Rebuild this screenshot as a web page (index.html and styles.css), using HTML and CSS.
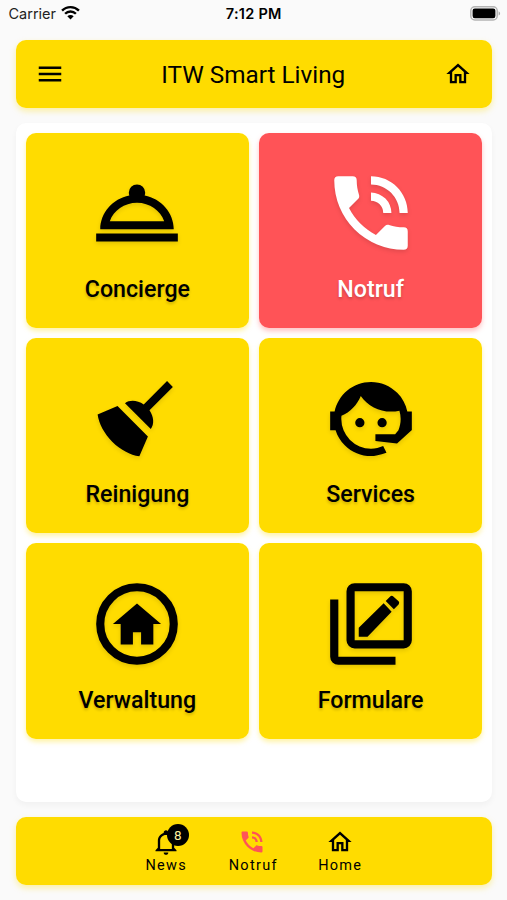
FILE: index.html
```html
<!DOCTYPE html>
<html lang="de">
<head>
    <meta charset="UTF-8">
    <meta name="viewport" content="width=device-width, initial-scale=1">
    <title>ITW Smart Living</title>
    <link rel="stylesheet" href="styles.css">
</head>

<body>

<div class="status">
  <div class="carrier">
    Carrier
    <svg class="wifi" viewBox="0 0 18 14">
      <path d="M1 5.2a11.4 11.4 0 0 1 16 0" />
      <path d="M3.9 8.2a7.2 7.2 0 0 1 10.2 0" />
      <path class="dot" d="M9 13.6l-3-3.1a4.3 4.3 0 0 1 6 0z" />
    </svg>
  </div>
  <div class="time">7:12 PM</div>
  <div class="battery">
    <svg viewBox="0 0 31 15" width="31" height="15">
      <rect x=".8" y=".8" width="26.4" height="13.2" rx="4" fill="#fafafa" stroke="#b4b4b4" stroke-width="1.5" />
      <rect x="2.6" y="2.6" width="22.8" height="9.6" rx="2.2" />
      <path d="M28.6 5.2c2 .8 2 3.6 0 4.4z" fill="#aaa" />
    </svg>
  </div>
</div>

<header class="bar header">
  <svg class="menu" viewBox="0 0 24 24"><path d="M3 6h18v2H3zM3 11h18v2H3zM3 16h18v2H3z" /></svg>
  <h1>ITW Smart Living</h1>
  <svg class="small" viewBox="0 0 24 24"><path d="M12 5.69L17 10.19V18H15V12H9V18H7V10.19L12 5.69M12 3L2 12H5V20H11V14H13V20H19V12H22L12 3" /></svg>
</header>

<main class="panel">
  <div class="tile">
    <svg class="icon" viewBox="0 0 24 24"><path d="M12 5a2 2 0 0 1 2 2c0 .24-.04.47-.12.69C17.95 8.5 21 11.91 21 16H3c0-4.09 3.05-7.5 7.12-8.31C10.04 7.47 10 7.24 10 7a2 2 0 0 1 2-2M22 19H2v-2h20v2M12 9.5c-3.11 0-5.75 1.94-6.66 4.5h13.32c-.91-2.56-3.55-4.5-6.66-4.5z" /></svg>
    <p>Concierge</p>
  </div>
  <div class="tile red">
    <svg class="icon" viewBox="0 0 24 24"><path d="M15,12H17A5,5 0 0,0 12,7V9A3,3 0 0,1 15,12M19,12H21C21,7 16.97,3 12,3V5C15.86,5 19,8.13 19,12M20,15.5C18.75,15.5 17.55,15.3 16.43,14.93C16.08,14.82 15.69,14.9 15.41,15.18L13.21,17.38C10.38,15.94 8.06,13.62 6.62,10.79L8.82,8.59C9.1,8.31 9.18,7.92 9.07,7.57C8.7,6.45 8.5,5.25 8.5,4A1,1 0 0,0 7.5,3H4A1,1 0 0,0 3,4A17,17 0 0,0 20,21A1,1 0 0,0 21,20V16.5A1,1 0 0,0 20,15.5Z" /></svg>
    <p>Notruf</p>
  </div>
  <div class="tile">
    <svg class="icon" viewBox="0 0 24 24"><path d="M19.36,2.72L20.78,4.14L15.06,9.85C16.13,11.39 16.28,13.24 15.38,14.44L9.06,8.12C10.26,7.22 12.11,7.37 13.65,8.44L19.36,2.72M5.93,17.57C3.92,15.56 2.69,13.16 2.35,10.92L7.23,8.83L14.67,16.27L12.58,21.15C10.34,20.81 7.94,19.58 5.93,17.57Z" /></svg>
    <p>Reinigung</p>
  </div>
  <div class="tile">
    <svg class="icon" viewBox="0 0 24 24"><path d="M18.72,14.76C19.07,13.91 19.26,13 19.26,12C19.26,11.28 19.15,10.59 18.96,9.95C18.31,10.1 17.63,10.18 16.92,10.18C13.86,10.18 11.15,8.67 9.5,6.34C8.61,8.5 6.91,10.26 4.77,11.22C4.73,11.47 4.73,11.74 4.73,12A7.27,7.27 0 0,0 12,19.27C13.05,19.27 14.06,19.04 14.97,18.63C15.54,19.72 15.8,20.26 15.78,20.26C14.14,20.81 12.87,21.08 12,21.08C9.58,21.08 7.27,20.13 5.57,18.42C4.53,17.38 3.76,16.11 3.33,14.73H2V10.18H3.09C3.93,6.04 7.6,2.92 12,2.92C14.4,2.92 16.71,3.87 18.42,5.58C19.69,6.84 20.54,8.45 20.89,10.18H22V14.73H21.94L18.38,18L13.08,17.4V15.73H17.91L18.72,14.76M9.27,11.77A1.13,1.13 0 0,1 9.27,14.04A1.13,1.13 0 0,1 9.27,11.77M14.72,11.77A1.13,1.13 0 0,1 14.72,14.04A1.13,1.13 0 0,1 14.72,11.77Z" /></svg>
    <p>Services</p>
  </div>
  <div class="tile">
    <svg class="icon" viewBox="0 0 24 24">
      <circle cx="12" cy="12" r="9" fill="none" stroke="currentColor" stroke-width="2" />
      <path d="M12 7L6.1 12H8v5h3v-3h2v3h3v-5h1.9z" />
    </svg>
    <p>Verwaltung</p>
  </div>
  <div class="tile">
    <svg class="icon" viewBox="0 0 24 24"><path d="M4 20h14v2H4a2 2 0 0 1-2-2V6h2zM20 16V4H8v12zM22 16a2 2 0 0 1-2 2H8a2 2 0 0 1-2-2V4a2 2 0 0 1 2-2h12a2 2 0 0 1 2 2zM9 12.9V15.1h2.15l5.9-6.1-1.95-2.1zM18.75 7.2l-1.15 1.2-2-2.05 1.1-1.1c.2-.2.56-.2.76 0l1.29 1.2c.2.2.2.55 0 .75z" fill-rule="evenodd" /></svg>
    <p>Formulare</p>
  </div>
</main>

<nav class="bar nav">
  <div class="item">
    <svg class="small" viewBox="0 0 24 24"><path d="M10 21H14C14 22.1 13.1 23 12 23S10 22.1 10 21M21 19V20H3V19L5 17V11C5 7.9 7 5.2 10 4.3V4C10 2.9 10.9 2 12 2S14 2.9 14 4V4.3C17 5.2 19 7.9 19 11V17L21 19M17 11C17 8.2 14.8 6 12 6S7 8.2 7 11V18H17V11Z" /></svg>
    <span class="badge">8</span>
    <span>News</span>
  </div>
  <div class="item">
    <svg class="small alert" viewBox="0 0 24 24"><path d="M15,12H17A5,5 0 0,0 12,7V9A3,3 0 0,1 15,12M19,12H21C21,7 16.97,3 12,3V5C15.86,5 19,8.13 19,12M20,15.5C18.75,15.5 17.55,15.3 16.43,14.93C16.08,14.82 15.69,14.9 15.41,15.18L13.21,17.38C10.38,15.94 8.06,13.62 6.62,10.79L8.82,8.59C9.1,8.31 9.18,7.92 9.07,7.57C8.7,6.45 8.5,5.25 8.5,4A1,1 0 0,0 7.5,3H4A1,1 0 0,0 3,4A17,17 0 0,0 20,21A1,1 0 0,0 21,20V16.5A1,1 0 0,0 20,15.5Z" /></svg>
    <span>Notruf</span>
  </div>
  <div class="item">
    <svg class="small" viewBox="0 0 24 24"><path d="M12 5.69L17 10.19V18H15V12H9V18H7V10.19L12 5.69M12 3L2 12H5V20H11V14H13V20H19V12H22L12 3" /></svg>
    <span>Home</span>
  </div>
</nav>

</body>
</html>
```
FILE: styles.css
```css
* {
    box-sizing: border-box;
}
body {
    margin: 0;
    height: 900px;
    padding: 0 15px 15px 15.5px;
    display: flex;
    flex-direction: column;
    background: #fafafa;
    color: #000;
    font-family: Roboto, "Liberation Sans", sans-serif;
    overflow: hidden;
}
svg {
    display: block;
    fill: currentColor;
    flex: none;
}
.status {
    height: 40px;
    margin: 0 -9px 0 -7px;
    padding-top: 5px;
    display: grid;
    grid-template-columns: 1fr auto 1fr;
    align-items: start;
    font: 14.5px/18px Inter, sans-serif;
    color: #222;
}
.carrier {
    display: flex;
    gap: 5px;
}
.wifi {
    width: 19px;
    height: 15px;
    fill: none;
    stroke: #000;
    stroke-width: 2.3;
}
.wifi .dot {
    fill: #000;
    stroke: none;
}
.time {
    margin-right: 2px;
    font-weight: 600;
    letter-spacing: .25px;
    color: #000;
}
.battery {
    justify-self: end;
    padding-top: 1px;
    color: #000;
}
.bar {
    height: 68px;
    flex: none;
    background: #ffdc00;
    border-radius: 10px;
    box-shadow: 0 3px 6px rgba(255, 220, 0, .35);
}
.header {
    display: flex;
    align-items: center;
    justify-content: space-between;
    padding: 0 20px 0 19px;
}
.header h1 {
    margin: 0;
    padding-right: 2px;
    font-size: 24.3px;
    font-weight: 400;
}
.menu {
    width: 30px;
    height: 30px;
}
.small {
    width: 28px;
    height: 28px;
}
.panel {
    flex: 1;
    margin: 14.6px 0 15px;
    padding: 10px;
    display: grid;
    grid-template-columns: 1fr 1fr;
    grid-auto-rows: 195.4px;
    align-content: start;
    gap: 10px;
    background: #fff;
    border-radius: 10px;
    box-shadow: 0 3px 6px rgba(0, 0, 0, .04);
}
.tile {
    display: flex;
    flex-direction: column;
    align-items: center;
    gap: 10.4px;
    padding: 31.8px 0 0 .5px;
    background: #ffdc00;
    border-radius: 10px;
    box-shadow: 0 3px 5px rgba(255, 220, 0, .35);
}
.tile p {
    margin: 0;
    font-size: 23.2px;
    font-weight: 500;
    line-height: 32px;
    text-shadow: 0 2px 3px rgba(0, 0, 0, .2);
}
.icon {
    width: 98px;
    height: 98px;
    filter: drop-shadow(0 2px 2px rgba(0, 0, 0, .12));
}
.red {
    background: #ff5357;
    color: #fff;
    box-shadow: 0 3px 5px rgba(255, 83, 87, .35);
}
.nav {
    display: flex;
    justify-content: center;
    padding: 11px 1px 0 0;
}
.item {
    position: relative;
    width: 87px;
    display: flex;
    flex-direction: column;
    align-items: center;
    font-size: 14.5px;
    line-height: 20px;
    letter-spacing: 1.3px;
}
.badge {
    position: absolute;
    top: -4px;
    left: 44px;
    width: 22px;
    height: 22px;
    border-radius: 50%;
    background: #000;
    color: #fff3a0;
    font-size: 13.5px;
    line-height: 22px;
    letter-spacing: 0;
    text-align: center;
}
.alert {
    margin-right: 2px;
    color: #ff5357;
}
```
